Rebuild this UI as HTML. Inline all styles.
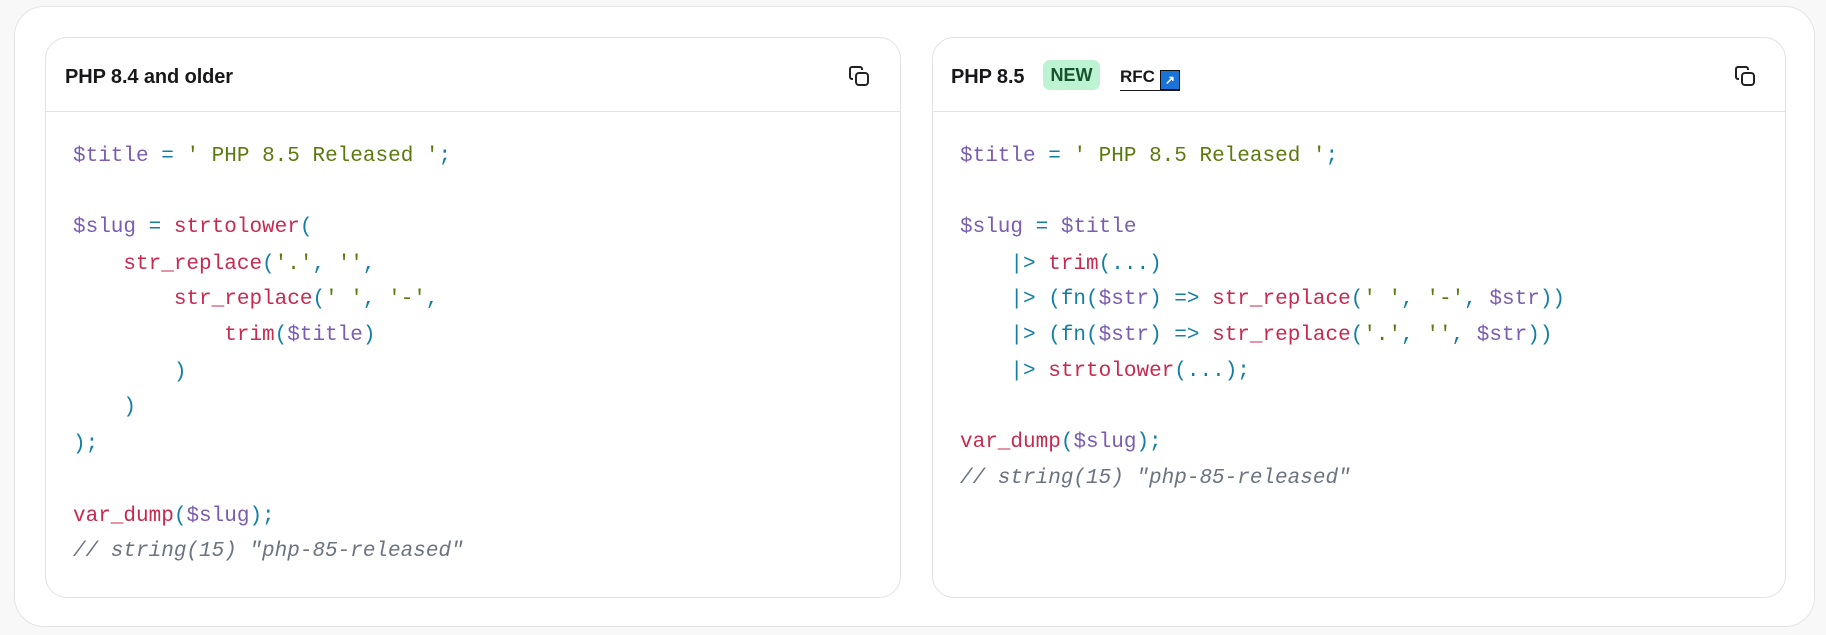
<!DOCTYPE html>
<html><head><meta charset="utf-8"><style>
html,body{margin:0;padding:0}
body{width:1826px;height:635px;background:#f8f8f8;position:relative;overflow:hidden;font-family:"Liberation Sans",sans-serif}
.outer{position:absolute;left:14px;top:6px;width:1801px;height:621px;background:#fff;border:1px solid #e4e4e7;border-radius:30px;box-sizing:border-box}
.card{position:absolute;top:37px;height:561px;background:#fff;border:1px solid #e2e2e6;border-radius:22px;box-sizing:border-box}
.hd{position:absolute;left:0;right:0;top:0;height:73px;border-bottom:1px solid #e2e2e6}
.ht{position:absolute;top:27px;font-size:20px;font-weight:600;color:#18181b;line-height:24px;letter-spacing:-0.1px}
.copy{position:absolute;top:26px;width:24px;height:24px}
.code{position:absolute;font-family:"Liberation Mono",monospace;font-size:21px;white-space:pre;line-height:24px}
.v{color:#7a5db0}.s{color:#5b7a0e}.f{color:#c8294f}.p{color:#137ea3}.c{color:#6b7280;font-style:italic}
.badge{position:absolute;left:110px;top:22px;width:57px;height:30px;background:#bdf2d2;border-radius:7px;color:#14532d;font-size:18px;font-weight:600;text-align:center;line-height:30px}
.rfc{position:absolute;left:187px;top:28px;font-size:17px;font-weight:600;color:#18181b;border-bottom:1.5px solid #18181b;line-height:22px}
.arr{display:inline-block;width:18px;height:18px;background:#1a73d9;border:1px solid #111;vertical-align:-2px;margin-left:5px;position:relative;color:#fff;font-size:12px;line-height:18px;text-align:center}
</style></head><body>
<div class="outer"></div>
<div class="card" style="left:45px;width:856px">
 <div class="hd"></div>
 <div class="ht" style="left:19px">PHP 8.4 and older</div>
 <svg class="copy" style="left:801px" viewBox="0 0 24 24" fill="none" stroke="#222" stroke-width="2"><rect x="9" y="9" width="12" height="12" rx="3"/><path d="M6 15H5a2 2 0 0 1-2-2V5a2 2 0 0 1 2-2h8a2 2 0 0 1 2 2v1"/></svg>
</div>
<div class="card" style="left:932px;width:854px">
 <div class="hd"></div>
 <div class="ht" style="left:18px">PHP 8.5</div>
 <div class="badge">NEW</div>
 <div class="rfc">RFC<span class="arr">↗</span></div>
 <svg class="copy" style="left:800px" viewBox="0 0 24 24" fill="none" stroke="#222" stroke-width="2"><rect x="9" y="9" width="12" height="12" rx="3"/><path d="M6 15H5a2 2 0 0 1-2-2V5a2 2 0 0 1 2-2h8a2 2 0 0 1 2 2v1"/></svg>
</div>

<div class="code" style="left:73px;top:145px"><span class="v">$title</span> <span class="p">=</span> <span class="s">' PHP 8.5 Released '</span><span class="p">;</span></div>
<div class="code" style="left:73px;top:216px"><span class="v">$slug</span> <span class="p">=</span> <span class="f">strtolower</span><span class="p">(</span></div>
<div class="code" style="left:73px;top:253px">    <span class="f">str_replace</span><span class="p">(</span><span class="s">'.'</span><span class="p">,</span> <span class="s">''</span><span class="p">,</span></div>
<div class="code" style="left:73px;top:288px">        <span class="f">str_replace</span><span class="p">(</span><span class="s">' '</span><span class="p">,</span> <span class="s">'-'</span><span class="p">,</span></div>
<div class="code" style="left:73px;top:324px">            <span class="f">trim</span><span class="p">(</span><span class="v">$title</span><span class="p">)</span></div>
<div class="code" style="left:73px;top:361px"><span class="p">        )</span></div>
<div class="code" style="left:73px;top:396px"><span class="p">    )</span></div>
<div class="code" style="left:73px;top:433px"><span class="p">);</span></div>
<div class="code" style="left:73px;top:505px"><span class="f">var_dump</span><span class="p">(</span><span class="v">$slug</span><span class="p">);</span></div>
<div class="code c" style="left:73px;top:540px">// string(15) "php-85-released"</div>

<div class="code" style="left:960px;top:145px"><span class="v">$title</span> <span class="p">=</span> <span class="s">' PHP 8.5 Released '</span><span class="p">;</span></div>
<div class="code" style="left:960px;top:216px"><span class="v">$slug</span> <span class="p">=</span> <span class="v">$title</span></div>
<div class="code" style="left:960px;top:253px">    <span class="p">|&gt;</span> <span class="f">trim</span><span class="p">(...)</span></div>
<div class="code" style="left:960px;top:288px">    <span class="p">|&gt; (fn(</span><span class="v">$str</span><span class="p">) =&gt;</span> <span class="f">str_replace</span><span class="p">(</span><span class="s">' '</span><span class="p">,</span> <span class="s">'-'</span><span class="p">,</span> <span class="v">$str</span><span class="p">))</span></div>
<div class="code" style="left:960px;top:324px">    <span class="p">|&gt; (fn(</span><span class="v">$str</span><span class="p">) =&gt;</span> <span class="f">str_replace</span><span class="p">(</span><span class="s">'.'</span><span class="p">,</span> <span class="s">''</span><span class="p">,</span> <span class="v">$str</span><span class="p">))</span></div>
<div class="code" style="left:960px;top:360px">    <span class="p">|&gt;</span> <span class="f">strtolower</span><span class="p">(...);</span></div>
<div class="code" style="left:960px;top:431px"><span class="f">var_dump</span><span class="p">(</span><span class="v">$slug</span><span class="p">);</span></div>
<div class="code c" style="left:960px;top:467px">// string(15) "php-85-released"</div>
</body></html>
